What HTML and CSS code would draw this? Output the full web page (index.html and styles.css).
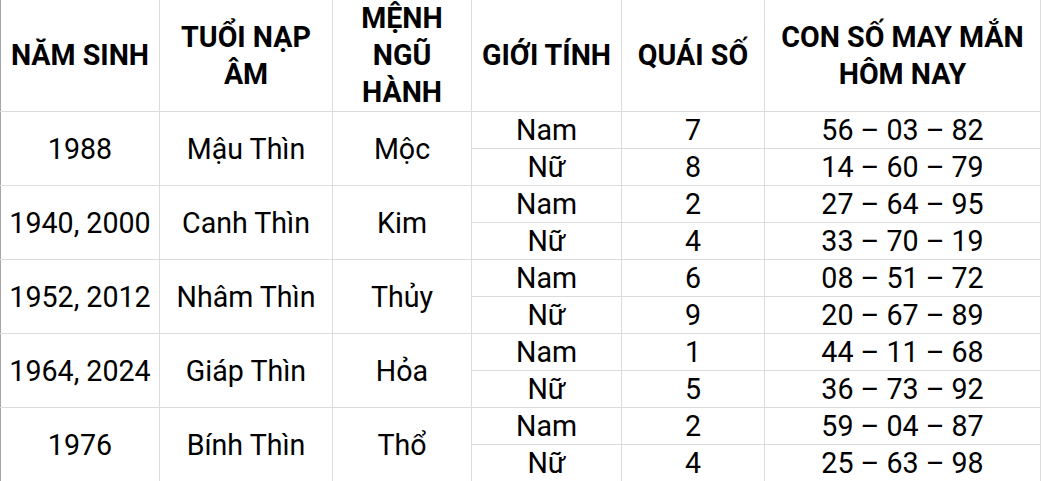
FILE: index.html
```html
<!DOCTYPE html>
<html lang="vi">
<head>
<meta charset="utf-8">
<link rel="stylesheet" href="styles.css">
</head>
<body>
<table class="lucky">
  <colgroup>
    <col class="c1"><col class="c2"><col class="c3"><col class="c4"><col class="c5"><col class="c6">
  </colgroup>
  <thead>
    <tr>
      <th>NĂM SINH</th>
      <th>TUỔI NẠP<br>ÂM</th>
      <th>MỆNH<br>NGŨ<br>HÀNH</th>
      <th>GIỚI TÍNH</th>
      <th>QUÁI SỐ</th>
      <th>CON SỐ MAY MẮN<br>HÔM NAY</th>
    </tr>
  </thead>
  <tbody>
    <tr><td rowspan="2">1988</td><td rowspan="2">Mậu Thìn</td><td rowspan="2">Mộc</td><td>Nam</td><td>7</td><td>56 – 03 – 82</td></tr>
    <tr><td>Nữ</td><td>8</td><td>14 – 60 – 79</td></tr>
    <tr><td rowspan="2">1940, 2000</td><td rowspan="2">Canh Thìn</td><td rowspan="2">Kim</td><td>Nam</td><td>2</td><td>27 – 64 – 95</td></tr>
    <tr><td>Nữ</td><td>4</td><td>33 – 70 – 19</td></tr>
    <tr><td rowspan="2">1952, 2012</td><td rowspan="2">Nhâm Thìn</td><td rowspan="2">Thủy</td><td>Nam</td><td>6</td><td>08 – 51 – 72</td></tr>
    <tr><td>Nữ</td><td>9</td><td>20 – 67 – 89</td></tr>
    <tr><td rowspan="2">1964, 2024</td><td rowspan="2">Giáp Thìn</td><td rowspan="2">Hỏa</td><td>Nam</td><td>1</td><td>44 – 11 – 68</td></tr>
    <tr><td>Nữ</td><td>5</td><td>36 – 73 – 92</td></tr>
    <tr><td rowspan="2">1976</td><td rowspan="2">Bính Thìn</td><td rowspan="2">Thổ</td><td>Nam</td><td>2</td><td>59 – 04 – 87</td></tr>
    <tr><td>Nữ</td><td>4</td><td>25 – 63 – 98</td></tr>
  </tbody>
</table>
</body>
</html>
```

FILE: styles.css
```css
html, body {
  margin: 0;
  padding: 0;
  background: #ffffff;
}
body {
  font-family: Roboto, "Liberation Sans", sans-serif;
  color: #000000;
}
.lucky {
  border-collapse: collapse;
  table-layout: fixed;
  width: 1040px;
  font-size: 28.6px;
}
.lucky .c1 { width: 159px; }
.lucky .c2 { width: 173px; }
.lucky .c3 { width: 139px; }
.lucky .c4 { width: 150px; }
.lucky .c5 { width: 143px; }
.lucky .c6 { width: 276px; }
.lucky th,
.lucky td {
  border: 1px solid #dcdcdc;
  padding: 0;
  text-align: center;
  vertical-align: middle;
}
.lucky th {
  border-top: none;
  height: 110px;
  font-weight: 700;
  line-height: 37px;
}
.lucky td {
  height: 36px;
  line-height: 36px;
}
.lucky tr > :first-child {
  border-left: 1px solid #a6a6a6;
}
```
